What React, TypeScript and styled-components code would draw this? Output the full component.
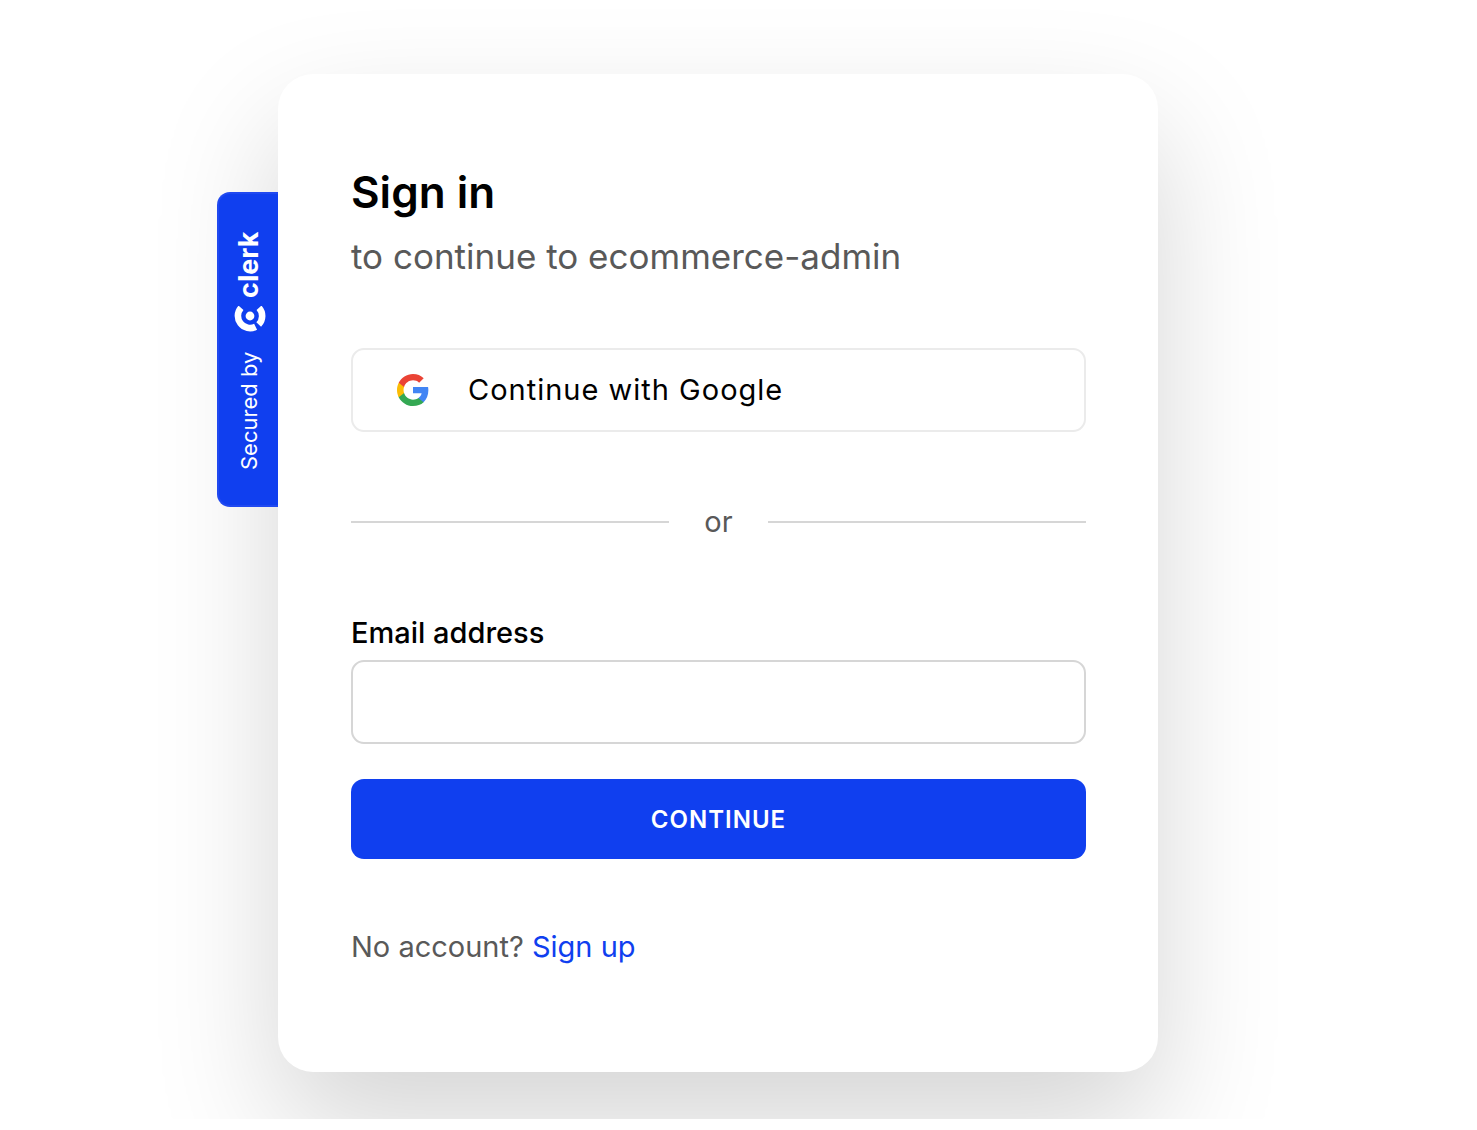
import React from "react";
import styled, { createGlobalStyle } from "styled-components";

const GlobalStyle = createGlobalStyle`
  *, *::before, *::after { box-sizing: border-box; }
  body {
    margin: 0;
    background: #ffffff;
    font-family: Inter, "Liberation Sans", sans-serif;
    color: #000000;
  }
`;

const Page = styled.main`
  display: flex;
  justify-content: center;
  padding: 74px 41px 47px 0;
  overflow: hidden;
`;

const Card = styled.section`
  position: relative;
  width: 100%;
  max-width: 880px;
  padding: 91px 72px 105px 73px;
  border-radius: 35px;
  background: #ffffff;
  box-shadow: 0 55px 124px rgba(0, 0, 0, 0.17);
`;

const Badge = styled.a`
  position: absolute;
  top: 118px;
  right: 100%;
  display: flex;
  align-items: center;
  gap: 20px;
  width: 61px;
  height: 315px;
  padding: 35px 0;
  writing-mode: vertical-rl;
  transform: rotate(180deg);
  border: 2px solid #2049f0;
  border-left: 0;
  border-radius: 0 13px 13px 0;
  background: #103fef;
  color: #ffffff;
  font-size: 22px;
  line-height: 28px;
  text-decoration: none;
  white-space: nowrap;
`;

const Brand = styled.span`
  display: flex;
  align-items: center;
  gap: 8px;
  font-size: 27px;
  font-weight: 700;
  line-height: 32px;
`;

const Title = styled.h1`
  margin: 0;
  font-size: 44px;
  font-weight: 600;
  line-height: 54px;
`;

const Subtitle = styled.p`
  margin: 12px 0 0;
  color: #595959;
  font-size: 35px;
  line-height: 50px;
`;

const SocialButton = styled.button`
  display: flex;
  align-items: center;
  gap: 39px;
  width: 100%;
  height: 84px;
  margin-top: 67px;
  padding: 0 44px;
  border: 2px solid #ebebeb;
  border-radius: 13px;
  background: #ffffff;
  color: #000000;
  font-family: inherit;
  font-size: 29px;
  line-height: 40px;
  letter-spacing: 1px;
`;

const Divider = styled.div`
  display: flex;
  align-items: center;
  gap: 35px;
  margin-top: 70px;
  color: #595959;
  font-size: 29px;
  line-height: 40px;

  &::before,
  &::after {
    content: "";
    flex: 1;
    height: 2px;
    background: #d6d6d6;
  }
`;

const Form = styled.form`
  display: flex;
  flex-direction: column;
  margin-top: 71px;
`;

const Label = styled.label`
  font-size: 29px;
  font-weight: 500;
  line-height: 40px;
`;

const Input = styled.input`
  width: 100%;
  height: 84px;
  margin-top: 7px;
  padding: 0 26px;
  border: 2px solid #d6d6d6;
  border-radius: 13px;
  background: #ffffff;
  font-family: inherit;
  font-size: 29px;
`;

const SubmitButton = styled.button`
  height: 80px;
  margin-top: 35px;
  border: 0;
  border-radius: 13px;
  background: #103fef;
  color: #ffffff;
  font-family: inherit;
  font-size: 24px;
  font-weight: 600;
  letter-spacing: 1px;
  text-transform: uppercase;
`;

const Footer = styled.p`
  margin: 68px 0 0;
  color: #595959;
  font-size: 29px;
  line-height: 40px;
`;

const FooterLink = styled.a`
  color: #103fef;
  text-decoration: none;
`;

const GoogleIcon = () => (
  <svg width="32" height="32" viewBox="1 1 22 22" aria-hidden="true">
    <path fill="#4285F4" d="M22.56 12.25c0-.78-.07-1.53-.2-2.25H12v4.26h5.92c-.26 1.37-1.04 2.53-2.21 3.31v2.77h3.57c2.08-1.92 3.28-4.74 3.28-8.09z" />
    <path fill="#34A853" d="M12 23c2.97 0 5.46-.98 7.28-2.66l-3.57-2.77c-.98.66-2.23 1.06-3.71 1.06-2.86 0-5.29-1.93-6.16-4.53H2.18v2.84C3.99 20.53 7.7 23 12 23z" />
    <path fill="#FBBC05" d="M5.84 14.09c-.22-.66-.35-1.36-.35-2.09s.13-1.43.35-2.09V7.07H2.18C1.43 8.55 1 10.22 1 12s.43 3.45 1.18 4.93l2.85-2.22.81-.62z" />
    <path fill="#EA4335" d="M12 5.38c1.62 0 3.06.56 4.21 1.64l3.15-3.15C17.45 2.09 14.97 1 12 1 7.7 1 3.99 3.47 2.18 7.07l3.66 2.84c.87-2.6 3.3-4.53 6.16-4.53z" />
  </svg>
);

const ClerkMark = () => (
  <svg width="36" height="26" viewBox="-16 -16 36 26" aria-hidden="true">
    <g transform="rotate(180)" fill="none" stroke="#ffffff" strokeWidth="6.6">
      <path d="M-9 -8.2A12.2 12.2 0 0 0 5.6 10.8" />
      <path d="M9 -8.2A12.2 12.2 0 0 1 8.7 8.5" />
      <circle r="4.4" fill="#ffffff" stroke="none" />
    </g>
  </svg>
);

export default function App() {
  return (
    <>
      <GlobalStyle />
      <Page>
        <Card>
          <Badge href="#clerk">
            <span>Secured by</span>
            <Brand>
              <ClerkMark />
              clerk
            </Brand>
          </Badge>
          <header>
            <Title>Sign in</Title>
            <Subtitle>to continue to ecommerce-admin</Subtitle>
          </header>
          <SocialButton type="button">
            <GoogleIcon />
            Continue with Google
          </SocialButton>
          <Divider>or</Divider>
          <Form onSubmit={(event) => event.preventDefault()}>
            <Label htmlFor="email">Email address</Label>
            <Input id="email" type="email" name="email" />
            <SubmitButton type="submit">Continue</SubmitButton>
          </Form>
          <Footer>
            No account? <FooterLink href="#sign-up">Sign up</FooterLink>
          </Footer>
        </Card>
      </Page>
    </>
  );
}
